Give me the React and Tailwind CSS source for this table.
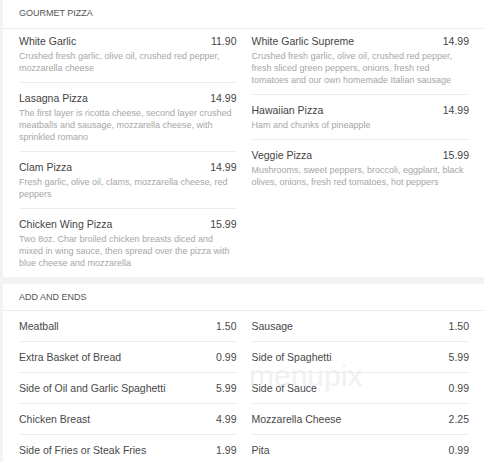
import React from 'react';

const pizzaLeft = [
  { name: 'White Garlic', price: '11.90', desc: 'Crushed fresh garlic, olive oil, crushed red pepper, mozzarella cheese' },
  { name: 'Lasagna Pizza', price: '14.99', desc: 'The first layer is ricotta cheese, second layer crushed meatballs and sausage, mozzarella cheese, with sprinkled romano' },
  { name: 'Clam Pizza', price: '14.99', desc: 'Fresh garlic, olive oil, clams, mozzarella cheese, red peppers' },
  { name: 'Chicken Wing Pizza', price: '15.99', desc: 'Two 8oz. Char broiled chicken breasts diced and mixed in wing sauce, then spread over the pizza with blue cheese and mozzarella' },
];

const pizzaRight = [
  { name: 'White Garlic Supreme', price: '14.99', desc: 'Crushed fresh garlic, olive oil, crushed red pepper, fresh sliced green peppers, onions, fresh red tomatoes and our own homemade Italian sausage' },
  { name: 'Hawaiian Pizza', price: '14.99', desc: 'Ham and chunks of pineapple' },
  { name: 'Veggie Pizza', price: '15.99', desc: 'Mushrooms, sweet peppers, broccoli, eggplant, black olives, onions, fresh red tomatoes, hot peppers' },
];

const sidesLeft = [
  { name: 'Meatball', price: '1.50' },
  { name: 'Extra Basket of Bread', price: '0.99' },
  { name: 'Side of Oil and Garlic Spaghetti', price: '5.99' },
  { name: 'Chicken Breast', price: '4.99' },
  { name: 'Side of Fries or Steak Fries', price: '1.99' },
];

const sidesRight = [
  { name: 'Sausage', price: '1.50' },
  { name: 'Side of Spaghetti', price: '5.99' },
  { name: 'Side of Sauce', price: '0.99' },
  { name: 'Mozzarella Cheese', price: '2.25' },
  { name: 'Pita', price: '0.99' },
];

function PizzaItem({ item }) {
  return (
    <div className="border-b border-[#eeeef0] pt-[7px] pb-2 first:pt-1 last:border-b-0">
      <div className="flex justify-between text-[10.5px] leading-4 text-[#444]">
        <span>{item.name}</span>
        <span>{item.price}</span>
      </div>
      <p className="mt-[1px] text-[9px] leading-3 text-[#a6a6a6]">{item.desc}</p>
    </div>
  );
}

function SideRow({ item }) {
  return (
    <div className="flex justify-between border-b border-[#eeeef0] py-[7px] text-[10.5px] leading-4 text-[#484848]">
      <span>{item.name}</span>
      <span>{item.price}</span>
    </div>
  );
}

export default function App() {
  return (
    <div className="relative h-[462px] overflow-hidden bg-[#f3f3f6] pl-[3px] font-['Liberation_Sans',Arial,sans-serif]">
      {/* Gourmet Pizza */}
      <section className="bg-white">
        <div className="border-b border-[#eeeef0] pl-4 pt-[6px] pb-2 text-[9px] leading-[14px] uppercase text-[#555]">
          Gourmet Pizza
        </div>
        <div className="grid grid-cols-2 gap-x-[15px] pl-4 pr-[15px]">
          <div>
            {pizzaLeft.map((item) => <PizzaItem key={item.name} item={item} />)}
          </div>
          <div>
            {pizzaRight.map((item) => <PizzaItem key={item.name} item={item} />)}
          </div>
        </div>
      </section>

      {/* Add and Ends */}
      <section className="mt-[7px] bg-white">
        <div className="border-b border-[#eeeef0] pl-4 pt-[6px] pb-[6px] text-[9px] leading-[14px] uppercase text-[#555]">
          Add and Ends
        </div>
        <div className="grid grid-cols-2 gap-x-[15px] pl-4 pr-[15px]">
          <div>
            {sidesLeft.map((item) => <SideRow key={item.name} item={item} />)}
          </div>
          <div>
            {sidesRight.map((item) => <SideRow key={item.name} item={item} />)}
          </div>
        </div>
      </section>

      {/* watermark */}
      <span className="pointer-events-none absolute left-[249px] top-[361px] text-[30px] leading-none text-[#ececee] opacity-70">
        menupix
      </span>
    </div>
  );
}
